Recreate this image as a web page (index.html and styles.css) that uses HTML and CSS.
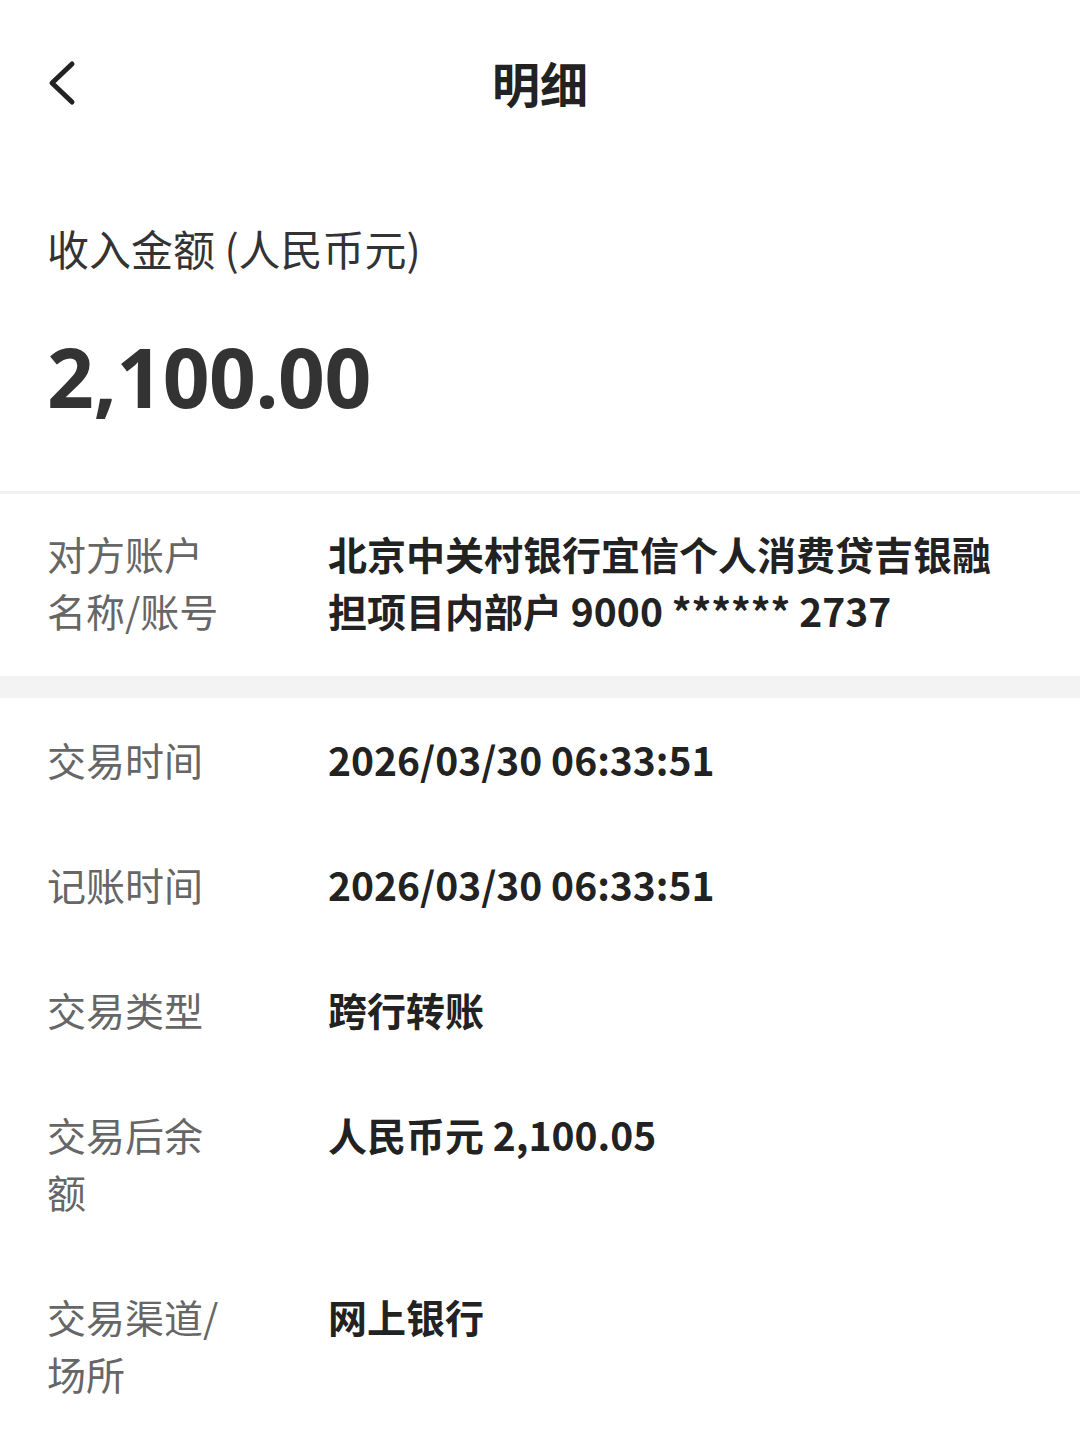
FILE: index.html
```html
<!DOCTYPE html>
<html lang="zh-CN">
  <head>
    <meta charset="UTF-8" />
    <meta name="viewport" content="width=device-width, initial-scale=1.0" />
    <title>明细</title>
    <link rel="stylesheet" href="styles.css">
  </head>
  <body>
    <div class="topbar">
      <a class="back" href="#">
        <svg width="40" height="60" viewBox="0 0 40 60">
          <polyline points="28,12 8,31 28,50" fill="none" stroke="#222" stroke-width="5" stroke-linecap="round" stroke-linejoin="round" />
        </svg>
      </a>
      <h1 class="title">明细</h1>
      <span></span>
    </div>

    <div class="summary">
      <p class="summaryLabel">收入金额 (人民币元)</p>
      <p class="amount">2,100.00</p>
    </div>

    <div class="section first">
      <div class="row">
        <div class="label">对方账户名称/账号</div>
        <div class="value wide">北京中关村银行宜信个人消费贷吉银融担项目内部户 9000 ****** 2737</div>
      </div>
    </div>

    <div class="section">
      <div class="row">
        <div class="label">交易时间</div>
        <div class="value">2026/03/30 06:33:51</div>
      </div>
      <div class="row">
        <div class="label">记账时间</div>
        <div class="value">2026/03/30 06:33:51</div>
      </div>
      <div class="row">
        <div class="label">交易类型</div>
        <div class="value">跨行转账</div>
      </div>
      <div class="row">
        <div class="label">交易后余额</div>
        <div class="value">人民币元 2,100.05</div>
      </div>
      <div class="row">
        <div class="label">交易渠道/场所</div>
        <div class="value">网上银行</div>
      </div>
    </div>
  </body>
</html>
```

FILE: styles.css
```css
html {
  font-family: "Noto Sans", "Noto Sans CJK SC", sans-serif;
}

body {
  margin: 0;
  background-color: #fff;
  color: #222;
}

p {
  margin: 0;
}

.topbar {
  display: grid;
  grid-template-columns: 1fr auto 1fr;
  align-items: center;
  height: 164px;
  padding: 0 44px;
}

.back {
  display: flex;
  width: 40px;
  height: 60px;
}

.title {
  margin: 0;
  font-family: "Noto Sans CJK SC", sans-serif;
  font-size: 48px;
  font-weight: 700;
  color: #222;
}

.summary {
  padding: 56px 47px 64px;
  border-bottom: 3px solid #f1f1f1;
}

.summaryLabel {
  font-family: "Noto Sans CJK SC", sans-serif;
  font-size: 42px;
  line-height: 55px;
  color: #333;
}

.amount {
  margin-top: 51px;
  font-family: "Noto Sans", sans-serif;
  font-size: 82px;
  line-height: 101px;
  font-weight: 700;
  color: #333;
  letter-spacing: -0.5px;
}

.section.first {
  border-bottom: 22px solid #f3f3f3;
}

.row {
  display: flex;
  padding: 33px 60px 35px 47px;
  font-family: "Noto Sans CJK SC", sans-serif;
  font-size: 39px;
  line-height: 57px;
}

.section.first .row {
  padding-top: 31px;
  padding-bottom: 37px;
}

.label {
  width: 180px;
  margin-right: 101px;
  flex-shrink: 0;
  color: #666;
}

.value {
  flex: 1;
  font-weight: 700;
  color: #222;
}
```
